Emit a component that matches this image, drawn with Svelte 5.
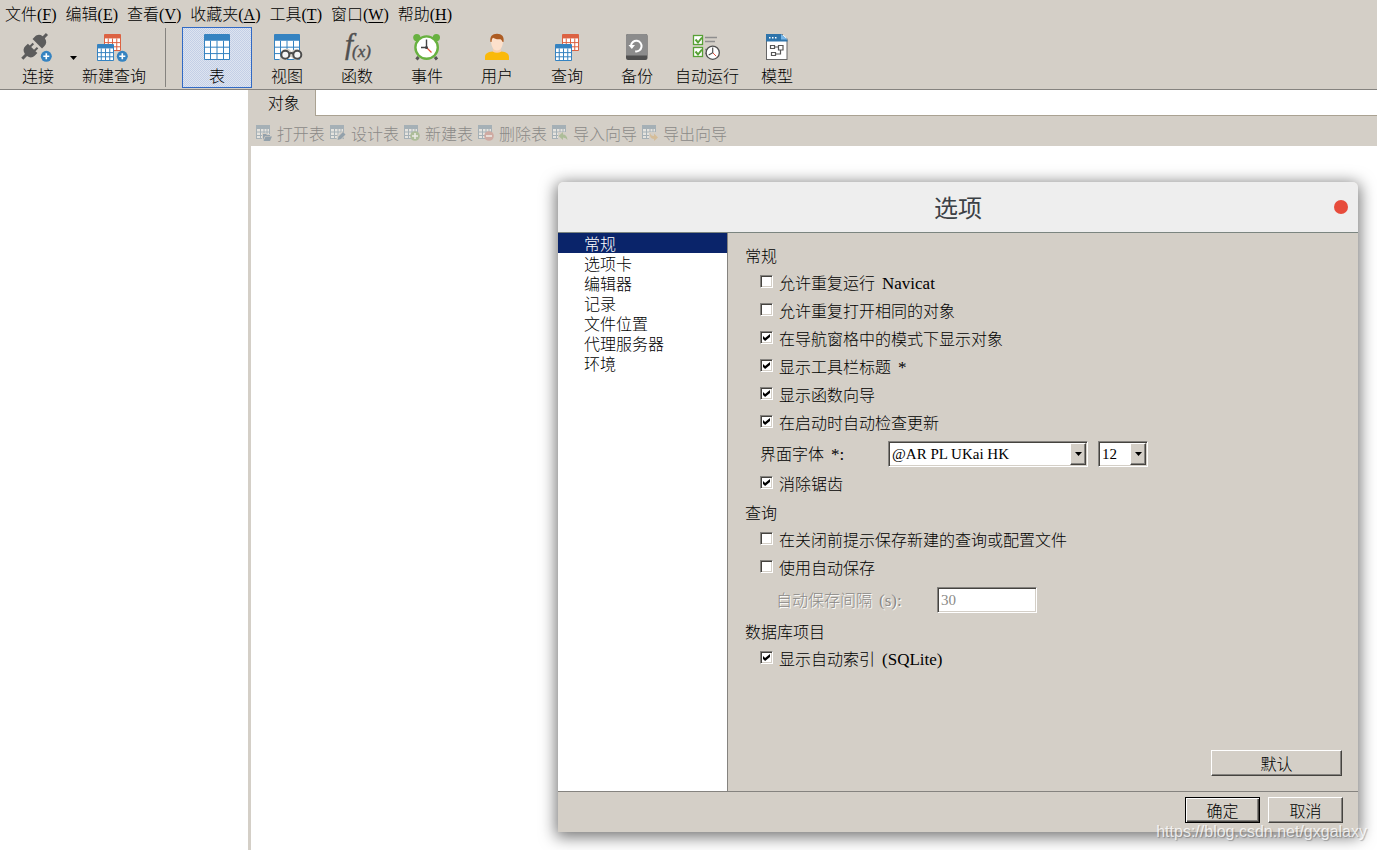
<script>
  const menus = [
    ['文件', 'F'], ['编辑', 'E'], ['查看', 'V'], ['收藏夹', 'A'],
    ['工具', 'T'], ['窗口', 'W'], ['帮助', 'H']
  ];
  const tools = [
    ['表', 'table'], ['视图', 'view'], ['函数', 'func'], ['事件', 'event'], ['用户', 'user'],
    ['查询', 'query'], ['备份', 'backup'], ['自动运行', 'auto'], ['模型', 'model']
  ];
  const actions = [
    ['打开表', 'open'], ['设计表', 'design'], ['新建表', 'add'],
    ['删除表', 'remove'], ['导入向导', 'import'], ['导出向导', 'export']
  ];
  const pages = ['常规', '选项卡', '编辑器', '记录', '文件位置', '代理服务器', '环境'];

  let activeTool = $state('table');
  let activePage = $state('常规');
  let general = $state([
    { text: '允许重复运行', latin: 'Navicat', on: false },
    { text: '允许重复打开相同的对象', latin: '', on: false },
    { text: '在导航窗格中的模式下显示对象', latin: '', on: true },
    { text: '显示工具栏标题', latin: '*', on: true },
    { text: '显示函数向导', latin: '', on: true },
    { text: '在启动时自动检查更新', latin: '', on: true }
  ]);
  let smoothing = $state([{ text: '消除锯齿', latin: '', on: true }]);
  let query = $state([
    { text: '在关闭前提示保存新建的查询或配置文件', latin: '', on: false },
    { text: '使用自动保存', latin: '', on: false }
  ]);
  let project = $state([{ text: '显示自动索引', latin: '(SQLite)', on: true }]);
  let autoSave = $derived(query[1].on);
</script>

{#snippet grid(x, y, size, color)}
  {@const step = size / 4}
  {@const top = size * 0.26}
  {@const row = (size - top) / 3}
  <g transform="translate({x} {y})">
    <rect width={size} height={size} rx="1" fill={color} />
    <rect x="1" y={top} width={size - 2} height={size - top - 1} fill="#fff" />
    <path
      d="M{step} {top}V{size}M{step * 2} {top}V{size}M{step * 3} {top}V{size}M0 {top + row}H{size}M0 {top + row * 2}H{size}"
      stroke={color} stroke-width="1" fill="none" />
  </g>
{/snippet}

{#snippet plus(x, y)}
  <circle cx={x} cy={y} r="5.5" fill="#3583c1" />
  <path d="M{x - 3} {y}h6M{x} {y - 3}v6" stroke="#fff" stroke-width="1.6" />
{/snippet}

{#snippet toolIcon(kind)}
  <svg class="icon" viewBox="0 0 34 32" aria-hidden="true">
    {#if kind === 'connect'}
      <g transform="translate(13.6 14.4) rotate(45)" fill="#5c5c5c">
        <path d="M-1.5 -17.5h3v4.500c3.600 .6 5.200 2.800 5.200 6v3.200h-13.400v-3.200c0-3.200 1.600-5.400 5.200-6z" />
        <path d="M-4 -1.200h2v4h4v-4h2v4h2.700v3.400c0 3.400-1.800 5.400-5.200 6v5.200h-3v-5.200c-3.400-.6-5.200-2.600-5.200-6v-3.400h2.700z" />
      </g>
      {@render plus(25.3, 24.3)}
    {:else if kind === 'newquery'}
      {@render grid(7, 2, 17, '#dc6242')}
      {@render grid(0, 12, 17, '#3583c1')}
      {@render plus(25.3, 24.3)}
    {:else if kind === 'table'}
      {@render grid(4, 2, 26, '#3583c1')}
    {:else if kind === 'view'}
      {@render grid(4, 2, 26, '#3583c1')}
      <path d="M11 22.5a5.4 5.4 0 0 1 10.3-2.5a5.4 5.4 0 1 1 0 5H17v4H9z" fill="#d4cfc7" />
      <g fill="#f4f4f4" stroke="#4c4c4c" stroke-width="2">
        <circle cx="15.3" cy="22.8" r="4" /><circle cx="27.3" cy="22.8" r="4" />
        <path d="M19 21.8q2.3-1.5 4.6 0" fill="none" />
      </g>
    {:else if kind === 'func'}
      <g font-family="Liberation Serif, serif" font-style="italic" fill="#505050" stroke="#505050" stroke-width=".4">
        <text x="5" y="22" font-size="29">f</text>
        <text x="12" y="25" font-size="17">(x)</text>
      </g>
    {:else if kind === 'event'}
      <path d="M8.5 25l-2 2.5M25 25l2 2.5" stroke="#555" stroke-width="3" />
      <circle cx="6.8" cy="5.6" r="3.6" fill="#68b140" /><circle cx="26.4" cy="5.6" r="3.6" fill="#68b140" />
      <circle cx="16.6" cy="15.6" r="11.2" fill="#fff" stroke="#68b140" stroke-width="2.4" />
      <path d="M16.5 15.5l5 5" stroke="#e4513b" stroke-width="1.2" />
      <path d="M16.5 7.5v8H11" stroke="#444" stroke-width="1.4" fill="none" />
      <circle cx="16.5" cy="15.5" r="1.5" fill="#444" />
    {:else if kind === 'user'}
      <path d="M13 16h8v6h-8z" fill="#f8cfae" />
      <path d="M5 28v-3c0-3.5 3-5 7.500-5.500q4.500 2.500 9 0c4.500 .5 7.500 2 7.500 5.500v3z" fill="#fab90a" />
      <path d="M11 8c0-4 2.400-5 6-5s6 1 6 5c0 6-2 10.500-6 10.500s-6-4.500-6-10.500z" fill="#fde0cb" />
      <path d="M10.500 10c-1-5.500 1.800-8.300 6.500-8.300s7.500 2.800 6.500 8.300h-1c-.3-1.500-1-2-2-2.800c-3.500 .5-6-.5-7.500-1.500c-1 1-1.300 2.500-1.500 4.300z" fill="#ad5c22" />
    {:else if kind === 'query'}
      {@render grid(12, 2, 17, '#dc6242')}
      {@render grid(5, 12, 17, '#3583c1')}
    {:else if kind === 'backup'}
      <rect x="6" y="2" width="21.500" height="26" rx="2" fill="#505050" />
      <path d="M8 2h17.500q2 0 2 2v19.500h-21.500v-19.500q0-2 2-2z" fill="#8c8c8c" />
      <path d="M11 13.500a5.300 5.300 0 1 1 4.200 5.800" fill="none" stroke="#fff" stroke-width="2" />
      <path d="M8.500 13h6.500l-3.200 4z" fill="#fff" />
    {:else if kind === 'auto'}
      <g fill="#fff" stroke="#57a135" stroke-width="1.300">
        <rect x="3.500" y="3.500" width="9" height="9" /><rect x="3.500" y="15.500" width="9" height="9" />
      </g>
      <path d="M5.500 7.500l2.500 3l4-5M5.500 19.500l2.500 3l4-5" fill="none" stroke="#57a135" stroke-width="2" />
      <path d="M15 5.500h12M15 9.500h10M15 17.500h3M15 21.500h2" stroke="#8e8e8e" stroke-width="1.600" />
      <circle cx="22.700" cy="20.700" r="6.600" fill="#fff" stroke="#505050" stroke-width="1.300" />
      <path d="M22.700 20.700l3.500 3.500" stroke="#e4513b" />
      <path d="M22.700 15.500v5.200l-4 2.300" fill="none" stroke="#505050" stroke-width="1.200" />
    {:else}
      <rect x="6.500" y="2.500" width="20.500" height="25" fill="#fff" stroke="#666" />
      <path d="M6 2h15l6.500 6v1.500h-21.500z" fill="#2e74ab" />
      <path d="M21 1h7v6z" fill="#d4cfc7" />
      <path d="M21 2v5.500h6.500z" fill="#78b7e8" />
      <path d="M9 5.700h1.500M12 5.700h1.500M15 5.700h1.500" stroke="#fff" stroke-width="1.600" />
      <path d="M10.500 13.500h4v3h-4zM18.500 13.500h4.500v4.500h-4.500zM11.500 20.500h4v3h-4zM14.500 15h4M20.500 18v4h-5" fill="none" stroke="#555" stroke-width="1.200" />
    {/if}
  </svg>
{/snippet}

{#snippet actionIcon(kind)}
  <svg class="small-icon" viewBox="0 0 16 16" aria-hidden="true">
    <path d="M0 0h14v14H0z" fill="#a5b0b6" />
    <path d="M1 4h3v2.500H1zM5 4h2.500v2.500H5zM8.500 4h2v2.500h-2zM11.500 4H13v2.500h-1.500zM1 7.500h3V10H1zM5 7.500h2.500V10H5zM8.500 7.500h2V10h-2zM11.500 7.500H13V10h-1.500zM1 11h3v2H1zM5 11h2.500v2H5z" fill="#e5e3de" />
    {#if kind === 'open'}
      <path d="M6 8h4l1 1h4v7H6z" fill="#d4cfc7" /><path d="M7 9h3l1 1h3v1H9l-2 4zM9.500 11.500H16L14 16H7.500z" fill="#93a1ab" />
    {:else if kind === 'design'}
      <path d="M6 16l1-5 5-5 4 4-6 6z" fill="#d4cfc7" /><path d="M7.500 15l1-3.500 4.500-4.500 2.500 2.500-4.500 4.500z" fill="#93a1ab" />
    {:else if kind === 'add'}
      <circle cx="11" cy="11" r="4.800" fill="#adbd99" /><path d="M8 11h6M11 8v6" stroke="#eceae6" stroke-width="1.500" />
    {:else if kind === 'remove'}
      <circle cx="11" cy="11" r="4.800" fill="#cfaaa2" /><path d="M8 11h6" stroke="#eceae6" stroke-width="1.600" />
    {:else if kind === 'import'}
      <path d="M6 7h9v9H6z" fill="#d4cfc7" /><path d="M6.500 11l4.500-4v2.500q4 0 4.500 5.500q-1.500-2.500-4.500-2.500v2.500z" fill="#adbd99" />
    {:else}
      <path d="M7 7h9v9H7z" fill="#d4cfc7" /><path d="M16 12.500l-4-4v2.500q-3.500 0-4-3.500q-1 6.500 4 6.500v2z" fill="#d5bd99" />
    {/if}
  </svg>
{/snippet}

{#snippet checks(items)}
  {#each items as item}
    <label class="check">
      <input type="checkbox" bind:checked={item.on} />
      <span>{item.text}<span class="latin">{item.latin}</span></span>
    </label>
  {/each}
{/snippet}

{#snippet arrow()}
  <svg class="arrow" viewBox="0 0 7 4" aria-hidden="true"><path d="M0 0h7L3.500 4z" /></svg>
{/snippet}

<div class="app">
  <nav class="menubar">
    {#each menus as [name, key]}
      <button>{name}<span class="latin">(<u>{key}</u>)</span></button>
    {/each}
  </nav>

  <div class="toolbar">
    <button class="tool connect">{@render toolIcon('connect')}<span>连接</span></button>
    <button class="drop" aria-label="连接">{@render arrow()}</button>
    <button class="tool">{@render toolIcon('newquery')}<span>新建查询</span></button>
    <div class="separator"></div>
    {#each tools as [name, kind]}
      <button class="tool" class:active={activeTool === kind} onclick={() => (activeTool = kind)}>
        {@render toolIcon(kind)}<span>{name}</span>
      </button>
    {/each}
  </div>

  <div class="workspace">
    <aside class="tree"></aside>
    <main>
      <div class="tabs"><button class="tab">对象</button></div>
      <div class="actions">
        {#each actions as [name, kind]}
          <button disabled>{@render actionIcon(kind)}{name}</button>
        {/each}
      </div>
      <div class="objects"></div>
    </main>
  </div>

  <div class="dialog" role="dialog" aria-labelledby="dialog-title">
    <header>
      <h1 id="dialog-title">选项</h1>
      <button class="close" aria-label="取消"></button>
    </header>
    <div class="dialog-body">
      <div class="pages">
        {#each pages as page}
          <button class:selected={activePage === page} onclick={() => (activePage = page)}>{page}</button>
        {/each}
      </div>
      <form class="settings" onsubmit={(e) => e.preventDefault()}>
        <h2>常规</h2>
        {@render checks(general)}
        <div class="field font-field">
          <label for="font">界面字体<span class="latin">*:</span></label>
          <div class="combo family">
            <select id="font"><option>@AR PL UKai HK</option></select>
            <span class="knob">{@render arrow()}</span>
          </div>
          <div class="combo size">
            <select aria-label="界面字体"><option>12</option></select>
            <span class="knob">{@render arrow()}</span>
          </div>
        </div>
        {@render checks(smoothing)}
        <h2>查询</h2>
        {@render checks(query)}
        <div class="field interval" class:off={!autoSave}>
          <label for="interval">自动保存间隔<span class="latin">(s):</span></label>
          <input id="interval" type="text" value="30" disabled={!autoSave} />
        </div>
        <h2>数据库项目</h2>
        {@render checks(project)}
        <button class="push default">默认</button>
      </form>
    </div>
    <footer>
      <button class="push primary">确定</button>
      <button class="push">取消</button>
    </footer>
  </div>

  <div class="watermark">https://blog.csdn.net/gxgalaxy</div>
</div>

<style>
  :global(body) {
    margin: 0;
  }
  .app {
    --face: #d4cfc7;
    position: relative;
    display: flex;
    flex-direction: column;
    min-height: 100vh;
    overflow: hidden;
    background: var(--face);
    color: #000;
    font: 300 16px/20px 'Noto Sans CJK SC', sans-serif;
  }
  .app * {
    box-sizing: border-box;
  }
  button,
  select,
  input {
    margin: 0;
    padding: 0;
    border: 0;
    border-radius: 0;
    background: none;
    color: inherit;
    font: inherit;
  }
  .latin,
  select,
  .interval input {
    font-family: 'Liberation Serif', serif;
    font-size: 17px;
    font-weight: 400;
  }
  select,
  .interval input {
    font-size: 15px;
  }
  .menubar .latin {
    font-size: 16px;
  }
  .settings .latin {
    margin-left: 7px;
  }
  u {
    text-underline-offset: 2px;
  }

  .menubar {
    display: flex;
    gap: 9px;
    height: 27px;
    padding: 0 5px;
  }
  .menubar button {
    white-space: nowrap;
  }

  .toolbar {
    display: flex;
    height: 63px;
    border-bottom: 1px solid #85837f;
  }
  .tool {
    display: flex;
    flex-direction: column;
    align-items: center;
    width: 70px;
    height: 61px;
    padding-top: 4px;
    border: 1px solid transparent;
    white-space: nowrap;
  }
  .tool span {
    margin-top: 1px;
  }
  .connect {
    margin-left: 3px;
  }
  .tool.active {
    border-color: #316ac5;
    background: repeating-conic-gradient(#c3cfe6 0 25%, #dde4f0 0 50%) 0 0 / 2px 2px;
  }
  .icon {
    flex: none;
    width: 34px;
    height: 32px;
    overflow: visible;
  }
  .drop {
    display: grid;
    place-items: center;
    width: 6px;
    margin: 0 3px 0 -3px;
  }
  .arrow {
    width: 7px;
    height: 4px;
  }
  .separator {
    width: 1px;
    margin: 1px 16px 2px;
    background: #85837f;
  }

  .workspace {
    display: flex;
    flex: 1;
  }
  .tree {
    width: 18%;
    background: #fff;
  }
  main {
    display: flex;
    flex: 1;
    flex-direction: column;
  }
  .tabs {
    display: flex;
    height: 26px;
    border-bottom: 1px solid #aaa292;
    background: #fff;
  }
  .tab {
    width: 68px;
    height: 26px;
    padding: 0 0 2px 5px;
    border-right: 1px solid #aaa292;
    background: var(--face);
  }
  .actions {
    display: flex;
    gap: 5px;
    height: 30px;
    padding: 0 8px;
  }
  .actions button {
    display: flex;
    align-items: center;
    gap: 5px;
    padding-top: 4px;
    color: #8b8a87;
    white-space: nowrap;
  }
  .small-icon {
    width: 16px;
    height: 16px;
  }
  .objects {
    flex: 1;
    margin-left: 3px;
    background: #fff;
  }

  .dialog {
    position: absolute;
    top: 182px;
    right: 19px;
    display: flex;
    flex-direction: column;
    width: 800px;
    max-width: 90vw;
    min-height: 650px;
    border-radius: 5px 5px 0 0;
    background: var(--face);
    box-shadow: 0 3px 16px 2px rgba(0, 0, 0, 0.55);
  }
  .dialog header {
    display: grid;
    grid-template-columns: 1fr auto 1fr;
    align-items: center;
    height: 51px;
    padding: 0 10px;
    border-bottom: 1px solid #7b8580;
    border-radius: 5px 5px 0 0;
    background: #eee;
  }
  h1 {
    grid-column: 2;
    margin: 0;
    color: #3b4045;
    font-size: 24px;
    font-weight: 400;
    line-height: 36px;
  }
  .close {
    justify-self: end;
    width: 14px;
    height: 14px;
    border-radius: 50%;
    background: #e74c3c;
  }
  .dialog-body {
    display: flex;
    flex: 1;
  }
  .pages {
    display: flex;
    flex-direction: column;
    width: 170px;
    border-right: 1px solid #85837f;
    background: #fff;
  }
  .pages button {
    height: 20px;
    padding-left: 26px;
    text-align: left;
  }
  .pages .selected {
    background: #0a246a;
    color: #fff;
  }
  .settings {
    display: flex;
    flex: 1;
    flex-direction: column;
    padding: 8px 16px 15px 17px;
  }
  h2 {
    height: 28px;
    margin: 0;
    padding: 4px 0;
    font-size: 16px;
    font-weight: 300;
    line-height: 20px;
  }
  .check {
    display: flex;
    align-items: center;
    gap: 6px;
    height: 28px;
    padding-left: 15px;
  }
  .check input {
    appearance: none;
    display: grid;
    place-items: center;
    width: 13px;
    height: 13px;
    margin-bottom: 3px;
    border: 1px solid;
    border-color: #85837f #fff #fff #85837f;
    background: #fff;
    box-shadow: inset 1px 1px #45433f, inset -1px -1px var(--face);
  }
  .check input:checked::before {
    content: '';
    width: 7px;
    height: 7px;
    background: #000;
    clip-path: polygon(0 28%, 0 70%, 30% 100%, 100% 42%, 100% 0, 30% 58%);
  }
  .field {
    display: flex;
    align-items: center;
    height: 35px;
    padding-left: 15px;
  }
  .font-field {
    height: 33px;
  }
  .font-field label {
    width: 128px;
  }
  .combo,
  .interval input {
    height: 26px;
    border: 1px solid;
    border-color: #85837f #fff #fff #85837f;
    background: #fff;
    box-shadow: inset 1px 1px #45433f, inset -1px -1px var(--face);
  }
  .combo {
    display: grid;
    padding: 1px;
  }
  .combo > * {
    grid-area: 1 / 1;
  }
  .combo select {
    appearance: none;
    padding: 0 18px 0 2px;
  }
  .family {
    width: 200px;
    margin-right: 10px;
  }
  .size {
    width: 50px;
  }
  .knob {
    display: grid;
    place-items: center;
    justify-self: end;
    width: 16px;
    pointer-events: none;
  }
  .knob,
  .push {
    border: 1px solid;
    border-color: #fff #45433f #45433f #fff;
    background: var(--face);
    box-shadow: inset -1px -1px #85837f;
  }
  .interval {
    padding-left: 31px;
  }
  .interval label {
    width: 161px;
  }
  .interval input {
    width: 100px;
    padding: 1px 3px 0;
  }
  .off label {
    color: #8b8a87;
    text-shadow: 1px 1px #fff;
  }
  .off input {
    color: #8b8a87;
  }
  .push {
    width: 75px;
    height: 26px;
  }
  .default {
    align-self: flex-end;
    width: 131px;
    margin-top: auto;
  }
  .primary {
    outline: 1px solid #000;
    outline-offset: -1px;
    border-color: #000;
    box-shadow: inset 1px 1px #fff, inset -1px -1px #45433f, inset -2px -2px #85837f;
  }
  .dialog footer {
    display: flex;
    justify-content: flex-end;
    gap: 8px;
    height: 41px;
    padding: 5px 15px;
    border-top: 1px solid #85837f;
  }
  .watermark {
    position: absolute;
    right: 10px;
    bottom: 8px;
    color: rgba(255, 255, 255, 0.8);
    font: 16px/20px 'Liberation Sans', sans-serif;
    text-shadow: 1px 1px 1px rgba(0, 0, 0, 0.25);
    pointer-events: none;
  }
</style>
